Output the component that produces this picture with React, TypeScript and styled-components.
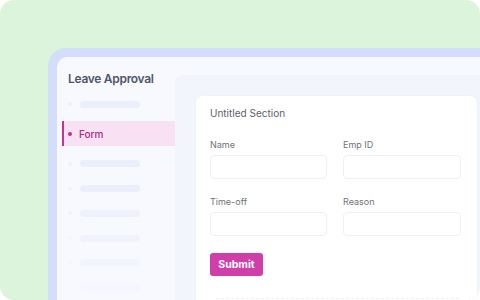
import styled, { createGlobalStyle } from "styled-components"

const Global = createGlobalStyle`
    html, body {
        margin: 0;
        padding: 0;
        background: #ffffff;
    }
    * {
        box-sizing: border-box;
    }
`

const Canvas = styled.div`
    width: 480px;
    height: 300px;
    background-color: #ddf4dc;
    border-radius: 14px;
    padding: 48px 0 0 48px;
    overflow: hidden;
    font-family: "Inter", "Liberation Sans", sans-serif;
`
const Frame = styled.div`
    height: 100%;
    background-color: #d3defa;
    border-radius: 18px 0 0 0;
    padding: 9px 0 0 9px;
`
const Window = styled.div`
    height: 100%;
    display: flex;
    background-color: #f7f9fe;
    border-radius: 10px 0 0 0;
`
const Sidebar = styled.div`
    width: 118px;
    flex-shrink: 0;
    padding-top: 14px;
    display: flex;
    flex-direction: column;
`
const Title = styled.h1`
    margin: 0 0 5px 11px;
    font-size: 12px;
    line-height: 16px;
    font-weight: 600;
    color: #50566a;
    letter-spacing: -0.3px;
`
type ItemProps = {
    $active?: boolean;
    $fade?: number;
}
const Item = styled.div<ItemProps>`
    display: flex;
    align-items: center;
    gap: 7px;
    height: ${p => (p.$active ? "26px" : "25px")};
    margin: ${p => (p.$active ? "4px 0 5px 5px" : "0 0 0 5px")};
    padding-left: 4px;
    border-left: 2px solid ${p => (p.$active ? "#c8338f" : "transparent")};
    background-color: ${p => (p.$active ? "#f8e1f3" : "transparent")};
    opacity: ${p => p.$fade ?? 1};
`
const Dot = styled.span<ItemProps>`
    width: 4px;
    height: 4px;
    border-radius: 50%;
    background-color: ${p => (p.$active ? "#c0318c" : "#eef1fb")};
`
const Bar = styled.span`
    width: 60px;
    height: 7px;
    margin-left: 1px;
    border-radius: 4px;
    background-color: #ebeffb;
`
const ItemText = styled.span`
    font-size: 10px;
    color: #b02a85;
    font-weight: 500;
`
const Main = styled.div`
    flex: 1;
    margin-top: 18px;
    background-color: #f3f5fd;
    border-radius: 8px 0 0 0;
    padding: 20px 2px 0 20px;
    display: flex;
`
const Card = styled.div`
    flex: 1;
    background-color: #ffffff;
    border: 1px solid #f0f2f9;
    border-bottom: none;
    border-radius: 8px 8px 0 0;
    padding: 10px 0 0 14px;
    display: flex;
    flex-direction: column;
`
const SectionTitle = styled.div`
    font-size: 10px;
    line-height: 14px;
    color: #5e6169;
    margin-bottom: 19px;
`
const Grid = styled.div`
    display: grid;
    grid-template-columns: 117px 118px;
    column-gap: 16px;
    row-gap: 17px;
`
const Field = styled.div`
    display: flex;
    flex-direction: column;
    gap: 4px;
`
const Label = styled.label`
    font-size: 9px;
    line-height: 12px;
    color: #6f7279;
`
const Input = styled.div`
    height: 24px;
    border: 1px solid #edf0f9;
    border-radius: 4px;
    background-color: #ffffff;
`
const Submit = styled.button`
    margin-top: 17px;
    width: 53px;
    height: 23px;
    padding: 0;
    border: none;
    border-radius: 3px;
    background-color: #d03fa9;
    color: #ffffff;
    font-family: inherit;
    font-size: 10.5px;
    font-weight: 700;
`
const Divider = styled.div`
    margin: 22px 18px 0 6px;
    border-top: 1px dashed #eef0f6;
`

const fields = ["Name", "Emp ID", "Time-off", "Reason"]
const fades = [1, 0.9, 0.75, 0.55, 0.35, 0.2]

export default function App() {
    return (
        <>
            <Global />
            <Canvas>
                <Frame>
                    <Window>
                        <Sidebar>
                            <Title>Leave Approval</Title>
                            <Item><Dot /><Bar /></Item>
                            <Item $active><Dot $active /><ItemText>Form</ItemText></Item>
                            {fades.map((f, i) => (
                                <Item key={i} $fade={f}><Dot /><Bar /></Item>
                            ))}
                        </Sidebar>
                        <Main>
                            <Card>
                                <SectionTitle>Untitled Section</SectionTitle>
                                <Grid>
                                    {fields.map(f => (
                                        <Field key={f}>
                                            <Label>{f}</Label>
                                            <Input />
                                        </Field>
                                    ))}
                                </Grid>
                                <Submit>Submit</Submit>
                                <Divider />
                            </Card>
                        </Main>
                    </Window>
                </Frame>
            </Canvas>
        </>
    )
}
